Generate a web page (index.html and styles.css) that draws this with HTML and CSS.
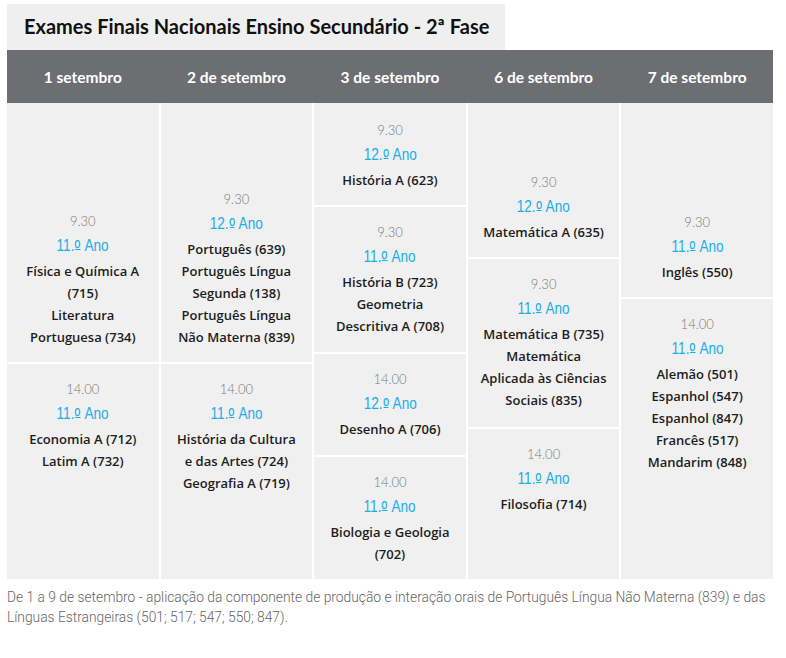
FILE: index.html
```html
<!DOCTYPE html>
<html lang="pt">
<head>
<meta charset="utf-8">
<title>Exames Finais Nacionais Ensino Secundário - 2ª Fase</title>
<link rel="stylesheet" href="styles.css">
</head>
<body>
<div class="page">
  <h1 class="title">Exames Finais Nacionais Ensino Secundário - 2ª Fase</h1>
  <div class="head">
    <div class="day">1 setembro</div>
    <div class="day">2 de setembro</div>
    <div class="day">3 de setembro</div>
    <div class="day">6 de setembro</div>
    <div class="day">7 de setembro</div>
  </div>
  <div class="grid">
    <div class="cell end c1 r1-6">
      <div class="time">9.30</div>
      <div class="year"><span>11.<span class="ord"><span class="o">º</span></span> Ano</span></div>
      <div class="subj">Física e Química A<br>(715)</div>
      <div class="subj">Literatura<br>Portuguesa (734)</div>
    </div>
    <div class="cell c1 r6-9">
      <div class="time">14.00</div>
      <div class="year"><span>11.<span class="ord"><span class="o">º</span></span> Ano</span></div>
      <div class="subj">Economia A (712)</div>
      <div class="subj">Latim A (732)</div>
    </div>

    <div class="cell end c2 r1-6">
      <div class="time">9.30</div>
      <div class="year"><span>12.<span class="ord"><span class="o">º</span></span> Ano</span></div>
      <div class="subj">Português (639)</div>
      <div class="subj">Português Língua<br>Segunda (138)</div>
      <div class="subj">Português Língua<br>Não Materna (839)</div>
    </div>
    <div class="cell c2 r6-9">
      <div class="time">14.00</div>
      <div class="year"><span>11.<span class="ord"><span class="o">º</span></span> Ano</span></div>
      <div class="subj">História da Cultura<br>e das Artes (724)</div>
      <div class="subj">Geografia A (719)</div>
    </div>

    <div class="cell end c3 r1-2">
      <div class="time">9.30</div>
      <div class="year"><span>12.<span class="ord"><span class="o">º</span></span> Ano</span></div>
      <div class="subj">História A (623)</div>
    </div>
    <div class="cell c3 r2-5">
      <div class="time">9.30</div>
      <div class="year"><span>11.<span class="ord"><span class="o">º</span></span> Ano</span></div>
      <div class="subj">História B (723)</div>
      <div class="subj">Geometria<br>Descritiva A (708)</div>
    </div>
    <div class="cell c3 r5-8">
      <div class="time">14.00</div>
      <div class="year"><span>12.<span class="ord"><span class="o">º</span></span> Ano</span></div>
      <div class="subj">Desenho A (706)</div>
    </div>
    <div class="cell c3 r8-9">
      <div class="time">14.00</div>
      <div class="year"><span>11.<span class="ord"><span class="o">º</span></span> Ano</span></div>
      <div class="subj">Biologia e Geologia<br>(702)</div>
    </div>

    <div class="cell end c4 r1-3">
      <div class="time">9.30</div>
      <div class="year"><span>12.<span class="ord"><span class="o">º</span></span> Ano</span></div>
      <div class="subj">Matemática A (635)</div>
    </div>
    <div class="cell c4 r3-7">
      <div class="time">9.30</div>
      <div class="year"><span>11.<span class="ord"><span class="o">º</span></span> Ano</span></div>
      <div class="subj">Matemática B (735)</div>
      <div class="subj">Matemática<br>Aplicada às Ciências<br>Sociais (835)</div>
    </div>
    <div class="cell c4 r7-9">
      <div class="time">14.00</div>
      <div class="year"><span>11.<span class="ord"><span class="o">º</span></span> Ano</span></div>
      <div class="subj">Filosofia (714)</div>
    </div>

    <div class="cell end c5 r1-4">
      <div class="time">9.30</div>
      <div class="year"><span>11.<span class="ord"><span class="o">º</span></span> Ano</span></div>
      <div class="subj">Inglês (550)</div>
    </div>
    <div class="cell c5 r4-9">
      <div class="time">14.00</div>
      <div class="year"><span>11.<span class="ord"><span class="o">º</span></span> Ano</span></div>
      <div class="subj">Alemão (501)</div>
      <div class="subj">Espanhol (547)</div>
      <div class="subj">Espanhol (847)</div>
      <div class="subj">Francês (517)</div>
      <div class="subj">Mandarim (848)</div>
    </div>
  </div>
  <p class="note">De 1 a 9 de setembro - aplicação da componente de produção e interação orais de Português Língua Não Materna (839) e das Línguas Estrangeiras (501; 517; 547; 550; 847).</p>
</div>
</body>
</html>
```

FILE: styles.css
```css
* { box-sizing: border-box; }
html, body { margin: 0; padding: 0; background: #ffffff; }
body { font-family: "Lato", "Liberation Sans", sans-serif; color: #1b1b1b; }

.page {
  width: 786px;
  padding: 4px 13px 0 7px;
}

.title {
  margin: 0;
  width: 498px;
  height: 46px;
  line-height: 45px;
  padding-left: 17px;
  background: #efefef;
  font-size: 20px;
  font-weight: 700;
  color: #111;
  white-space: nowrap;
}

.head {
  display: grid;
  grid-template-columns: repeat(5, 1fr);
  column-gap: 2px;
  height: 53px;
  background: #6d6e71;
}
.day {
  display: flex;
  align-items: center;
  justify-content: center;
  color: #fff;
  font-size: 15.5px;
  font-weight: 700;
}

.grid {
  display: grid;
  grid-template-columns: repeat(5, 1fr);
  grid-template-rows: 102px 50px 38px 53px 8px 63px 26px 122px;
  gap: 2px;
}

.cell {
  background: #f0f0f0;
  display: flex;
  flex-direction: column;
  align-items: center;
  justify-content: flex-start;
  padding: 14px 2px;
  text-align: center;
}
.cell.end { justify-content: flex-end; }

.c1 { grid-column: 1; }
.c2 { grid-column: 2; }
.c3 { grid-column: 3; }
.c4 { grid-column: 4; }
.c5 { grid-column: 5; }
.r1-2 { grid-row: 1 / 2; }
.r1-3 { grid-row: 1 / 3; }
.r1-4 { grid-row: 1 / 4; }
.r1-6 { grid-row: 1 / 6; }
.r2-5 { grid-row: 2 / 5; }
.r3-7 { grid-row: 3 / 7; }
.r4-9 { grid-row: 4 / 9; }
.r5-8 { grid-row: 5 / 8; }
.r6-9 { grid-row: 6 / 9; }
.r7-9 { grid-row: 7 / 9; }
.r8-9 { grid-row: 8 / 9; }

.time {
  font-size: 13px;
  line-height: 22px;
  font-weight: 300;
  color: #7a7a7a;
}
.year {
  font-family: "Liberation Sans", "Arial", sans-serif;
  font-size: 17px;
  line-height: 28px;
  color: #1aaeea;
}
.year > span {
  display: inline-block;
  transform: scaleX(0.8);
}
.year .ord {
  display: inline-block;
  line-height: 1;
  height: 12.9px;
  border-bottom: 1.6px solid currentColor;
  margin: 0 1.5px 0 1px;
  vertical-align: baseline;
}
.year .o {
  display: inline-block;
  line-height: 1;
  transform-origin: 50% 14.4px;
  transform: translateY(4.6px) scale(1.15, 1.35);
}
.subj {
  font-family: "Open Sans", "Lato", sans-serif;
  font-size: 13px;
  line-height: 22px;
  font-weight: 600;
  color: #1d1d1d;
  white-space: nowrap;
}

.note {
  margin: 8px 0 0;
  font-family: "Roboto", "Liberation Sans", sans-serif;
  font-weight: 300;
  font-size: 13.8px;
  line-height: 20px;
  color: #666;
}
```
